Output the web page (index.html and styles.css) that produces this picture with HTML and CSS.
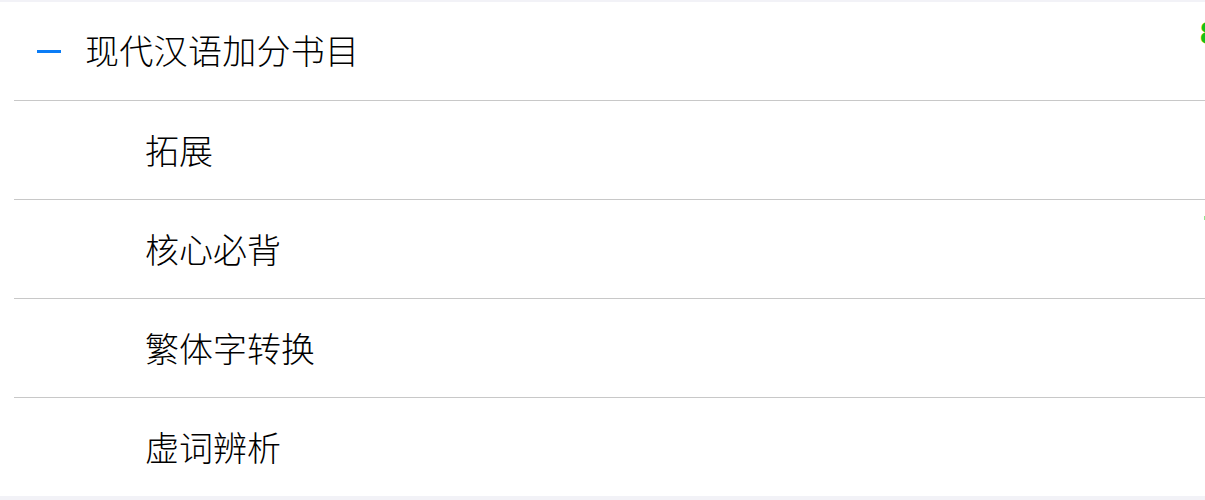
FILE: index.html
```html
<!DOCTYPE html>
<html lang="zh-CN">
<head>
    <meta charset="UTF-8">
    <meta name="viewport" content="width=device-width, initial-scale=1.0">
    <title>现代汉语加分书目</title>
    <link rel="stylesheet" href="styles.css">
</head>
<body>

    <div class="book-list">
        <div class="list-header">
            <span class="collapse-mark"></span>
            <span class="header-title">现代汉语加分书目</span>
            <span class="side-badge">8</span>
        </div>

        <div class="list-item">拓展</div>
        <div class="list-item">核心必背<span class="side-dot"></span></div>
        <div class="list-item">繁体字转换</div>
        <div class="list-item">虚词辨析</div>
    </div>

</body>
</html>
```

FILE: styles.css
```css
html, body {
    height: 100%;
}

body {
    margin: 0;
    padding: 2px 0 0;
    box-sizing: border-box;
    overflow: hidden;
    background-color: #f2f2f7;
    font-family: "Noto Sans CJK SC", "Noto Sans", sans-serif;
    font-weight: 300;
    color: #000;
}

.book-list {
    position: relative;
    background-color: #fff;
}

.list-header {
    display: flex;
    align-items: center;
    height: 98px;
    padding-left: 37px;
}

.collapse-mark {
    display: block;
    width: 24px;
    height: 3px;
    background-color: #0a7cf6;
}

.header-title {
    margin-left: 24px;
    margin-bottom: 4px;
    font-size: 34px;
    letter-spacing: 0.3px;
}

.side-badge {
    position: absolute;
    top: 16px;
    left: 1200px;
    font-family: "Liberation Sans", Arial, sans-serif;
    font-size: 31px;
    font-weight: bold;
    line-height: 1;
    color: #14c214;
}

.list-item {
    position: relative;
    display: flex;
    align-items: center;
    height: 96px;
    margin-left: 14px;
    padding: 0 0 2px 131px;
    border-top: 1px solid #c8c8c8;
    font-size: 34px;
}

.side-dot {
    position: absolute;
    top: 16px;
    left: 1190px;
    width: 1px;
    height: 4px;
    background-color: #8ee68e;
}
```
